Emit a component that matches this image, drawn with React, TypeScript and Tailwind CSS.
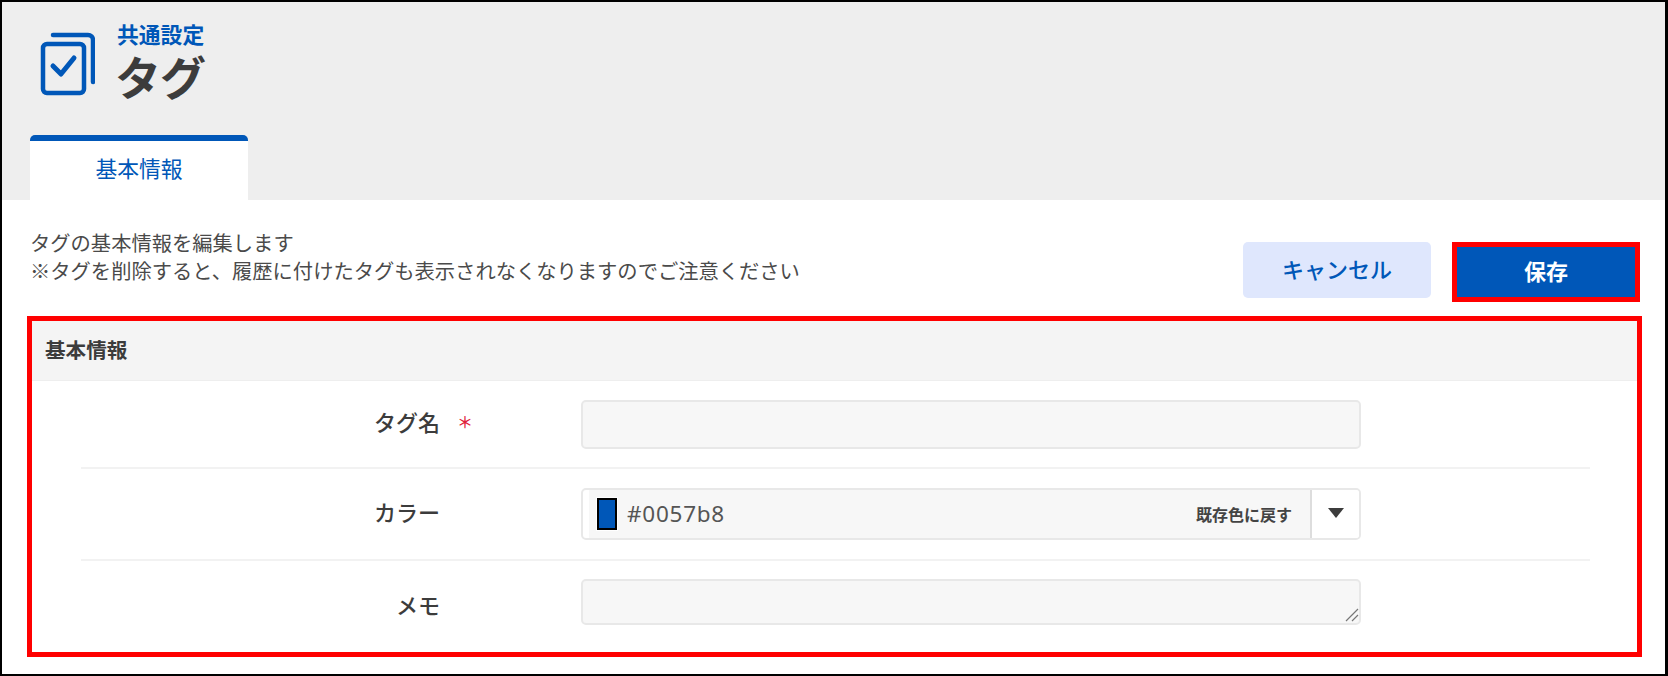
export default function App() {
  return (
    <div
      className="w-[1668px] h-[676px] overflow-hidden bg-white border-t-2 border-l-2 border-b-2 border-r-[3px] border-black text-[#3c3c3c]"
      style={{ fontFamily: '"Noto Sans CJK JP", "Noto Sans", sans-serif' }}
    >
      {/* Page header */}
      <div className="h-[198px] bg-[#eeeeee] flex flex-col">
        <div className="flex pl-[37px] pt-[12px]">
          <svg className="mt-[18px]" width="56" height="65" viewBox="0 0 56 65" fill="none" stroke="#0057b8" strokeWidth="4.5" strokeLinecap="round" strokeLinejoin="round">
            <path d="M14 3H49a5 5 0 0 1 5 5V50" />
            <rect x="4" y="12" width="41" height="49" rx="4" />
            <path d="M14 34l8 8 13-16" strokeWidth="5" />
          </svg>
          <div className="ml-[22px]">
            <div className="text-[21.8px] leading-[40px] font-bold text-[#0057b8]">共通設定</div>
            <div className="text-[46px] leading-[42px] font-bold tracking-[-1px] -ml-[2px]">タグ</div>
          </div>
        </div>
        <div className="mt-auto ml-[28px] w-[218px] h-[65px] bg-white border-t-[6px] border-[#0057b8] rounded-t-[5px] flex items-center justify-center pb-[4px] text-[#0057b8] text-[21.8px]">
          基本情報
        </div>
      </div>

      {/* Intro + actions */}
      <div className="h-[116px] pl-[28px] pr-[25px] flex">
        <div className="pt-[28px] text-[20.3px] leading-[28px] text-[#4a4a4a]">
          <p>タグの基本情報を編集します</p>
          <p>※タグを削除すると、履歴に付けたタグも表示されなくなりますのでご注意ください</p>
        </div>
        <div className="ml-auto pt-[42px] flex items-start gap-[21px]">
          <button className="w-[188px] h-[56px] pb-[3px] rounded-[5px] bg-[#dfe7fd] text-[#0057b8] text-[22px] font-medium">
            キャンセル
          </button>
          <button className="w-[188px] h-[60px] pb-[4px] bg-[#0057b8] border-[5px] border-[#ff0000] text-white text-[22px] font-bold">
            保存
          </button>
        </div>
      </div>

      {/* Basic info section */}
      <div className="ml-[25px] w-[1615px] h-[341px] border-[5px] border-[#ff0000]">
        <div className="h-[60px] pb-[2px] bg-[#f4f4f4] border-b border-[#eeeeee] pl-[13px] flex items-center text-[20.6px] font-bold">
          基本情報
        </div>
        <div className="ml-[49px] mr-[47px]">
          <div className="h-[88px] grid grid-cols-[359px_780px] gap-x-[141px] items-center border-b-2 border-[#f2f2f2]">
            <div className="relative pb-[5px] text-right text-[22px] font-medium">
              タグ名
              <span className="absolute left-[376px] top-[4px] text-[#e0203a] text-[16px]">＊</span>
            </div>
            <input className="h-[49px] bg-[#f7f7f7] border-2 border-[#e8e8e8] rounded-[5px]" />
          </div>
          <div className="h-[92px] grid grid-cols-[359px_780px] gap-x-[141px] items-center border-b-2 border-[#f2f2f2]">
            <div className="pb-[6px] text-right text-[22px] font-medium">カラー</div>
            <div className="h-[52px] border-2 border-[#e8e8e8] rounded-[5px] flex overflow-hidden">
              <div className="flex-1 ml-[6px] bg-[#f7f7f7] flex items-center border-r-2 border-[#dddddd]">
                <div className="ml-[8px] w-[20px] h-[32px] bg-[#0057b8] border-2 border-black ring-1 ring-white" />
                <span className="ml-[10px] text-[22.5px] tracking-[0.75px] text-[#555555]" style={{ fontFamily: '"Noto Sans", sans-serif' }}>#0057b8</span>
                <span className="ml-auto mr-[18px] text-[16px] font-bold text-[#444444]">既存色に戻す</span>
              </div>
              <div className="w-[47px] flex items-center justify-center bg-white pb-[3px]">
                <svg width="16" height="10" viewBox="0 0 16 10" fill="#3c3c3c">
                  <path d="M0 0h16L8 10z" />
                </svg>
              </div>
            </div>
          </div>
          <div className="pt-[18px] grid grid-cols-[359px_780px] gap-x-[141px]">
            <div className="pt-[9px] text-right text-[22px] font-medium">メモ</div>
            <div className="relative h-[46px]">
              <textarea className="block w-full h-full resize-none bg-[#f7f7f7] border-2 border-[#e8e8e8] rounded-[5px]" />
              <svg className="absolute right-[2px] bottom-[3px]" width="14" height="14" viewBox="0 0 14 14" stroke="#777777" strokeWidth="1.2">
                <path d="M1 13L13 1M7 13L13 7" />
              </svg>
            </div>
          </div>
        </div>
      </div>
    </div>
  );
}
